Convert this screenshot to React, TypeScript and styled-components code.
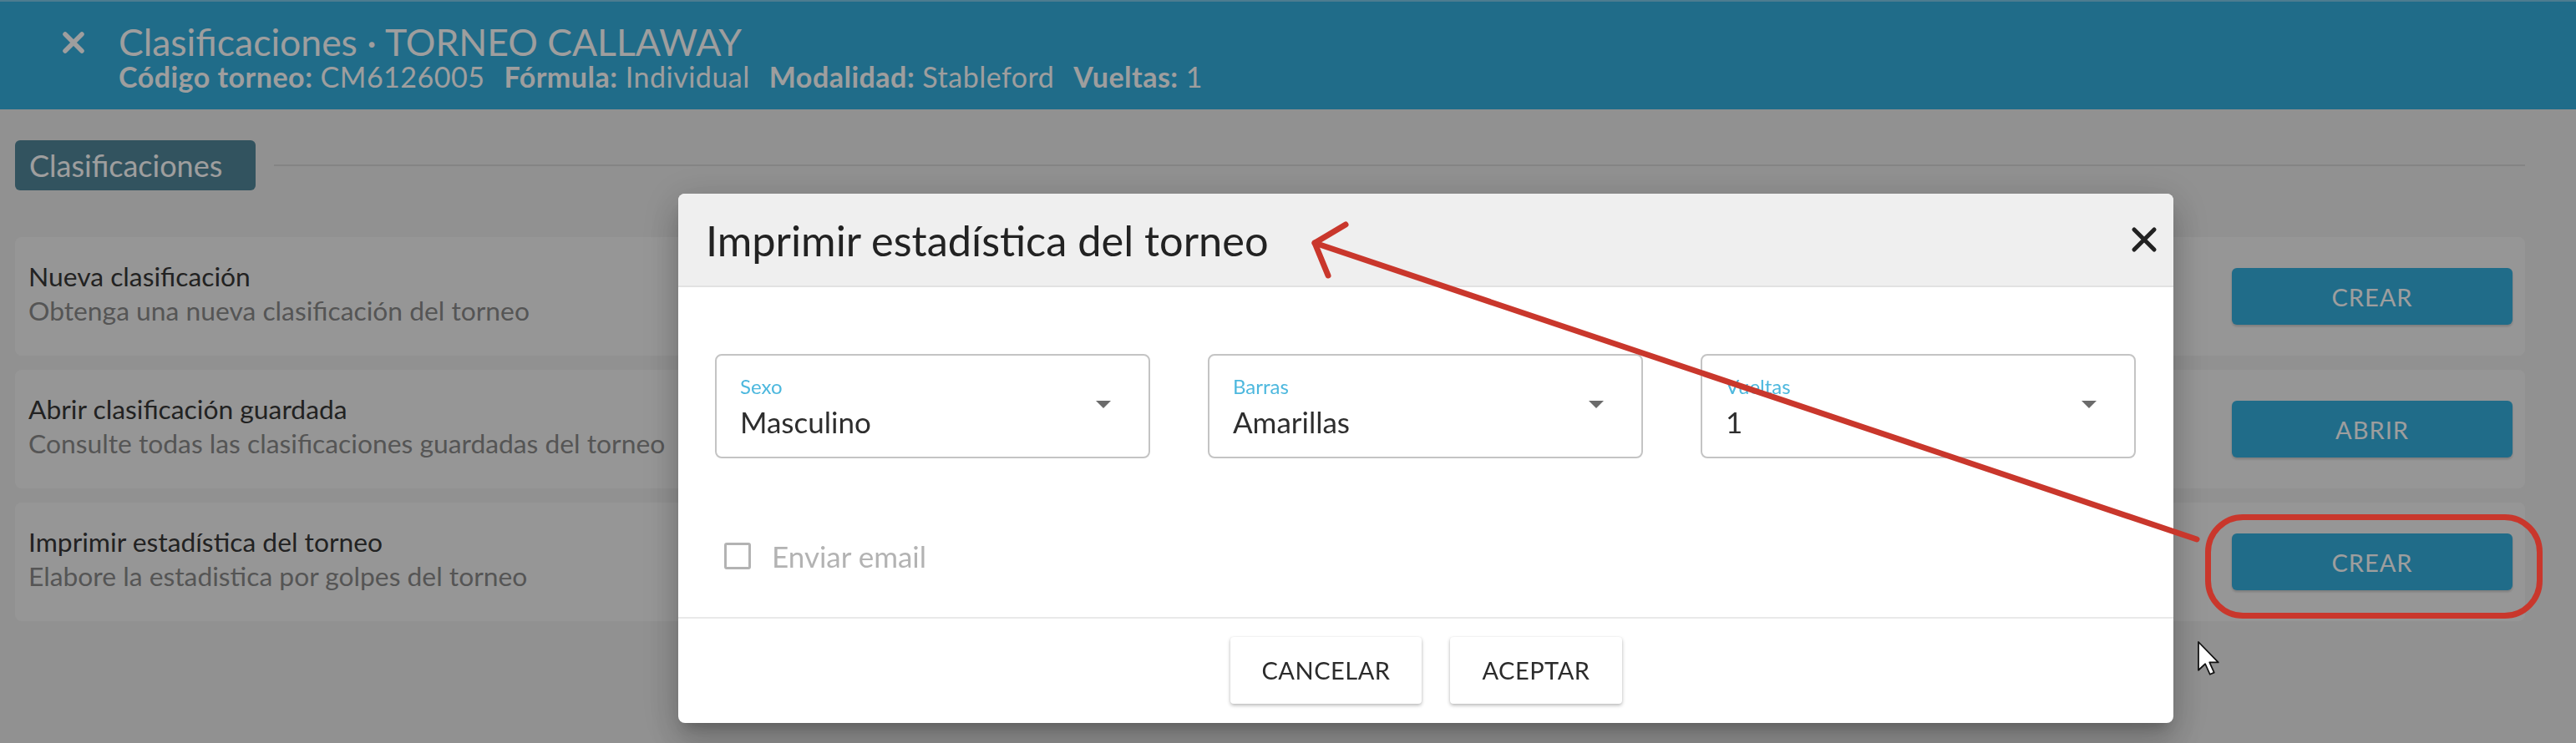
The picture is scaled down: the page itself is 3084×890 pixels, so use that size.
import * as React from 'react';
import styled, { createGlobalStyle } from 'styled-components';

const GlobalStyle = createGlobalStyle`
  html, body {
    margin: 0;
    padding: 0;
    width: 3084px;
    height: 890px;
    overflow: hidden;
    background: #eaeaea;
    font-family: Lato, "Liberation Sans", sans-serif;
  }
  * { box-sizing: border-box; }
`;

const actions = [
  { title: 'Nueva clasificación', text: 'Obtenga una nueva clasificación del torneo', button: 'CREAR' },
  { title: 'Abrir clasificación guardada', text: 'Consulte todas las clasificaciones guardadas del torneo', button: 'ABRIR' },
  { title: 'Imprimir estadística del torneo', text: 'Elabore la estadistica por golpes del torneo', button: 'CREAR' },
];

const info = [
  { label: 'Código torneo:', value: 'CM6126005' },
  { label: 'Fórmula:', value: 'Individual' },
  { label: 'Modalidad:', value: 'Stableford' },
  { label: 'Vueltas:', value: '1' },
];

const selects = [
  { label: 'Sexo', value: 'Masculino' },
  { label: 'Barras', value: 'Amarillas' },
  { label: 'Vueltas', value: '1' },
];

const Cross = ({ size, stroke, color }: { size: number; stroke: number; color: string }) => (
  <svg width={size} height={size} viewBox="0 0 24 24">
    <path d="M4 4 L20 20 M20 4 L4 20" stroke={color} strokeWidth={stroke} strokeLinecap="round" />
  </svg>
);

export default function App() {
  return (
    <>
      <GlobalStyle />
      <Page>
        <Header>
          <HeaderClose>
            <Cross size={30} stroke={4.4} color="#ffffff" />
          </HeaderClose>
          <HeaderText>
            <HeaderTitle>Clasificaciones · TORNEO CALLAWAY</HeaderTitle>
            <HeaderInfo>
              {info.map((i) => (
                <InfoPair key={i.label}>
                  <b>{i.label}</b> {i.value}
                </InfoPair>
              ))}
            </HeaderInfo>
          </HeaderText>
        </Header>
        <Content>
          <TabRow>
            <Tab>Clasificaciones</Tab>
            <TabLine />
          </TabRow>
          <CardList>
            {actions.map((a) => (
              <Card key={a.title}>
                <CardText>
                  <CardTitle>{a.title}</CardTitle>
                  <CardDesc>{a.text}</CardDesc>
                </CardText>
                <PrimaryButton>{a.button}</PrimaryButton>
              </Card>
            ))}
          </CardList>
        </Content>
      </Page>

      <Backdrop>
        <Dialog>
          <DialogHeader>
            <DialogTitle>Imprimir estadística del torneo</DialogTitle>
            <DialogClose>
              <Cross size={36} stroke={3.4} color="#222222" />
            </DialogClose>
          </DialogHeader>
          <DialogBody>
            <SelectGrid>
              {selects.map((s) => (
                <Select key={s.label}>
                  <SelectText>
                    <SelectLabel>{s.label}</SelectLabel>
                    <SelectValue>{s.value}</SelectValue>
                  </SelectText>
                  <Caret />
                </Select>
              ))}
            </SelectGrid>
            <CheckRow>
              <CheckBox />
              <CheckLabel>Enviar email</CheckLabel>
            </CheckRow>
          </DialogBody>
          <DialogFooter>
            <FlatButton>CANCELAR</FlatButton>
            <FlatButton>ACEPTAR</FlatButton>
          </DialogFooter>
        </Dialog>
      </Backdrop>

      <Annotations width="3084" height="890" viewBox="0 0 3084 890">
        <g stroke="#c9372c" strokeWidth="7" strokeLinecap="round" strokeLinejoin="round" fill="none">
          <path d="M1574 291 L2630 646" />
          <path d="M1611 269 L1574 291 L1590 330" />
          <rect x="2643.5" y="619.5" width="397" height="118" rx="42" />
        </g>
        <path
          transform="translate(2632 769) scale(1.25)"
          d="M0 0 L0 27 L6.5 21 L11 31 L15 29.3 L10.6 19.5 L19 19.5 Z"
          fill="#ffffff"
          stroke="#111111"
          strokeWidth="1.4"
          strokeLinejoin="round"
        />
      </Annotations>
    </>
  );
}

const Page = styled.div`
  width: 3084px;
  height: 890px;
  background: #eaeaea;
`;

const Header = styled.header`
  height: 131px;
  display: flex;
  align-items: flex-start;
  padding: 25px 0 0 73px;
  background: #35aedd;
  border-top: 2px solid #7cc9e8;
  color: #ffffff;
`;

const HeaderClose = styled.div`
  width: 30px;
  height: 48px;
  display: flex;
  align-items: center;
`;

const HeaderText = styled.div`
  margin-left: 39px;
  display: flex;
  flex-direction: column;
`;

const HeaderTitle = styled.div`
  font-size: 44.5px;
  line-height: 46px;
`;

const HeaderInfo = styled.div`
  display: flex;
  gap: 23px;
  font-size: 34px;
  line-height: 37px;
  letter-spacing: 0.5px;

  b {
    font-weight: 700;
  }
`;

const InfoPair = styled.span``;

const Content = styled.main`
  padding: 37px 61px 0 18px;
`;

const TabRow = styled.div`
  display: flex;
  align-items: center;
`;

const Tab = styled.div`
  width: 288px;
  height: 60px;
  padding-left: 17px;
  display: flex;
  align-items: center;
  border-radius: 6px;
  background: #528699;
  color: #ffffff;
  font-size: 36px;
`;

const TabLine = styled.div`
  flex: 1;
  height: 2px;
  margin-left: 22px;
  background: #d6d6d6;
`;

const CardList = styled.div`
  margin-top: 56px;
  display: flex;
  flex-direction: column;
  gap: 17px;
`;

const Card = styled.section`
  height: 142px;
  display: flex;
  align-items: center;
  justify-content: space-between;
  padding: 0 15px 0 16px;
  border-radius: 8px;
  background: #f3f3f3;
`;

const CardText = styled.div`
  padding-bottom: 6px;
  font-size: 31.8px;
  line-height: 41px;
`;

const CardTitle = styled.div`
  color: #373737;
`;

const CardDesc = styled.div`
  color: #8a8a8a;
`;

const PrimaryButton = styled.button`
  width: 336px;
  height: 68px;
  border: none;
  border-radius: 6px;
  background: #35aedd;
  box-shadow: 0 2px 3px rgba(0, 0, 0, 0.18);
  color: #ffffff;
  font-family: Lato, "Liberation Sans", sans-serif;
  font-size: 29px;
  letter-spacing: 1px;
`;

const Backdrop = styled.div`
  position: fixed;
  inset: 0;
  background: rgba(0, 0, 0, 0.38);
  display: flex;
  align-items: flex-start;
  padding: 232px 0 0 812px;
`;

const Dialog = styled.div`
  width: 1790px;
  height: 634px;
  display: flex;
  flex-direction: column;
  background: #ffffff;
  border-radius: 8px;
  overflow: hidden;
  box-shadow: 0 11px 15px -7px rgba(0, 0, 0, 0.2), 0 24px 38px 3px rgba(0, 0, 0, 0.14),
    0 9px 46px 8px rgba(0, 0, 0, 0.12);
`;

const DialogHeader = styled.div`
  height: 112px;
  flex-shrink: 0;
  display: flex;
  align-items: center;
  justify-content: space-between;
  padding: 0 17px 0 33px;
  background: #efefef;
  border-bottom: 2px solid #e2e2e2;
`;

const DialogTitle = styled.h2`
  margin: 0;
  font-size: 50.5px;
  font-weight: 400;
  color: #222222;
`;

const DialogClose = styled.div`
  display: flex;
`;

const DialogBody = styled.div`
  flex: 1;
  padding: 80px 45px 0 44px;
`;

const SelectGrid = styled.div`
  display: grid;
  grid-template-columns: repeat(3, 1fr);
  gap: 69px;
`;

const Select = styled.div`
  height: 125px;
  display: flex;
  align-items: center;
  padding: 0 45px 0 28px;
  border: 2px solid #c4c4c4;
  border-radius: 8px;
`;

const SelectText = styled.div`
  flex: 1;
  display: flex;
  flex-direction: column;
`;

const SelectLabel = styled.div`
  font-size: 24px;
  line-height: 28px;
  color: #4db8de;
`;

const SelectValue = styled.div`
  margin-top: 8px;
  font-size: 35px;
  line-height: 40px;
  color: #2e2e2e;
`;

const Caret = styled.div`
  margin-top: -4px;
  width: 0;
  height: 0;
  border-left: 9px solid transparent;
  border-right: 9px solid transparent;
  border-top: 9px solid #6b6b6b;
`;

const CheckRow = styled.div`
  margin-top: 96px;
  display: flex;
  align-items: center;
  gap: 25px;
  padding-left: 11px;
`;

const CheckBox = styled.div`
  width: 32px;
  height: 32px;
  border: 3px solid #b3b3b3;
  border-radius: 3px;
`;

const CheckLabel = styled.span`
  font-size: 35px;
  color: #b3b3b3;
`;

const DialogFooter = styled.div`
  height: 127px;
  flex-shrink: 0;
  display: flex;
  align-items: center;
  justify-content: center;
  gap: 34px;
  padding-bottom: 2px;
  border-top: 2px solid #e9e9e9;
`;

const FlatButton = styled.button`
  height: 80px;
  padding: 0 38px;
  border: none;
  border-radius: 4px;
  background: #ffffff;
  box-shadow: 0 2px 4px rgba(0, 0, 0, 0.28), 0 0 2px rgba(0, 0, 0, 0.08);
  color: #2b2b2b;
  font-family: Lato, "Liberation Sans", sans-serif;
  font-size: 29px;
  letter-spacing: 0.5px;
`;

const Annotations = styled.svg`
  position: fixed;
  left: 0;
  top: 0;
  pointer-events: none;
`;
